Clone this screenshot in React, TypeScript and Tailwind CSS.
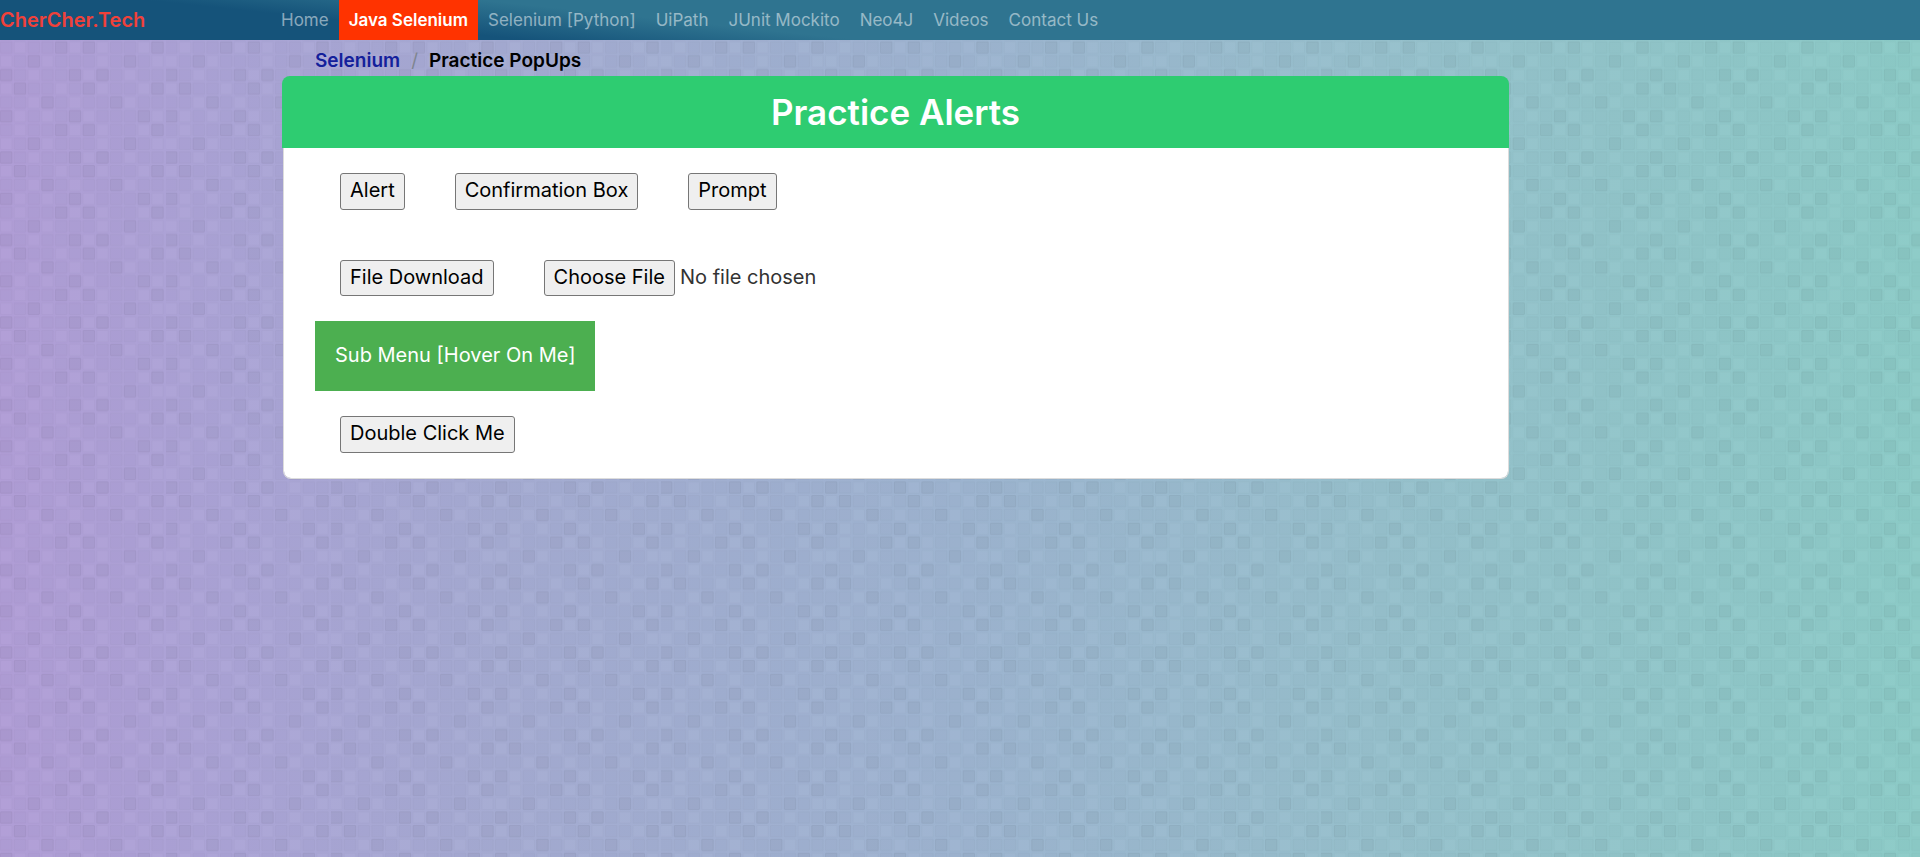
import type { ReactNode } from "react";

const links = [
  "Home",
  "Java Selenium",
  "Selenium [Python]",
  "UiPath",
  "JUnit Mockito",
  "Neo4J",
  "Videos",
  "Contact Us",
];

const CELL = 13.75;

const darkCells = [
  [1, 6, 11],
  [3, 8],
  [0, 5, 10],
  [4, 6, 11],
  [2, 9],
  [0, 5, 7],
];

const lightCells = [
  [0, 4, 7, 10],
  [2, 5, 9],
  [1, 3, 6, 11],
  [1, 5, 7, 10],
  [0, 3, 7, 11],
  [2, 6, 9],
];

function Mosaic() {
  const cells = [];
  for (let row = 0; row < 6; row++) {
    for (let col = 0; col < 12; col++) {
      const dark = darkCells[row].includes(col);
      const light = lightCells[row].includes(col);
      cells.push(
        <rect
          key={`${row}-${col}`}
          x={col * CELL + 0.5}
          y={row * CELL + 0.5}
          width={11.5}
          height={11.5}
          rx={0.8}
          fill={light ? "#ffffff" : "#000000"}
          fillOpacity={dark ? 0.04 : light ? 0.02 : 0.014}
          stroke="#000000"
          strokeOpacity={dark ? 0.045 : 0.02}
        />,
      );
    }
  }
  return (
    <svg className="absolute inset-0 -z-10 h-full w-full" aria-hidden="true">
      <defs>
        <pattern id="mosaic" width={CELL * 12} height={CELL * 6} patternUnits="userSpaceOnUse">
          {cells}
        </pattern>
      </defs>
      <rect width="100%" height="100%" fill="url(#mosaic)" />
    </svg>
  );
}

function PlainButton({ children }: { children: ReactNode }) {
  return (
    <button
      type="button"
      className="rounded-[3px] border border-[#767676] bg-[#efefef] px-[9px] pt-[2px] pb-1 leading-[29px] text-black"
    >
      {children}
    </button>
  );
}

export default function App() {
  return (
    <div className="relative isolate min-h-screen bg-[linear-gradient(90deg,#b09dd6_0%,#aba4d6_12%,#a5abd2_26%,#9db4d0_50%,#96c0cc_72%,#8ccbc7_100%)] font-['Inter',sans-serif] text-[20px] leading-[30px]">
      <Mosaic />
      <nav className="flex h-10 items-stretch bg-[linear-gradient(6deg,#15537a_55px,#2f7490_90px)]">
        <a href="#" className="flex w-[271px] shrink-0 items-center text-[20px] font-semibold text-[#f0413a]">
          CherCher.Tech
        </a>
        <ul className="flex items-stretch text-[17px]">
          {links.map((label) => (
            <li key={label} className="flex">
              <a
                href="#"
                className={
                  label === "Java Selenium"
                    ? "flex items-center bg-[#ff3300] px-[10px] font-semibold whitespace-nowrap text-white"
                    : "flex items-center px-[10px] whitespace-nowrap text-white/50"
                }
              >
                {label}
              </a>
            </li>
          ))}
        </ul>
      </nav>
      <main className="pr-[411px] pl-[282px]">
        <ol className="flex h-9 items-center gap-[11px] pt-[6px] pl-[33px] text-[19px] font-semibold">
          <li>
            <a href="#" className="text-[#14209b]">
              Selenium
            </a>
          </li>
          <li aria-hidden="true" className="font-normal text-[#7f8590]">
            /
          </li>
          <li className="text-black">Practice PopUps</li>
        </ol>
        <section>
          <h1 className="flex h-[72px] items-center justify-center rounded-t-lg bg-[#2ecc71] text-[35px] font-semibold text-white">
            Practice Alerts
          </h1>
          <div className="ml-px rounded-b-lg border border-t-0 border-[#dcdcdc] bg-white bg-clip-padding pl-[31px]">
            <div className="flex gap-[50px] p-[25px]">
              <PlainButton>Alert</PlainButton>
              <PlainButton>Confirmation Box</PlainButton>
              <PlainButton>Prompt</PlainButton>
            </div>
            <div className="flex h-[86px] gap-[50px] p-[25px]">
              <PlainButton>File Download</PlainButton>
              <input
                type="file"
                aria-label="Choose a file to upload"
                className="text-[#333333] file:mr-[5px] file:h-9 file:rounded-[3px] file:border file:border-solid file:border-[#767676] file:bg-[#efefef] file:px-[9px] file:pb-[2px] file:text-black"
              />
            </div>
            <button type="button" className="block h-[70px] bg-[#4caf50] px-5 pb-[2px] text-white">
              Sub Menu [Hover On Me]
            </button>
            <div className="flex p-[25px]">
              <PlainButton>Double Click Me</PlainButton>
            </div>
          </div>
        </section>
      </main>
    </div>
  );
}
